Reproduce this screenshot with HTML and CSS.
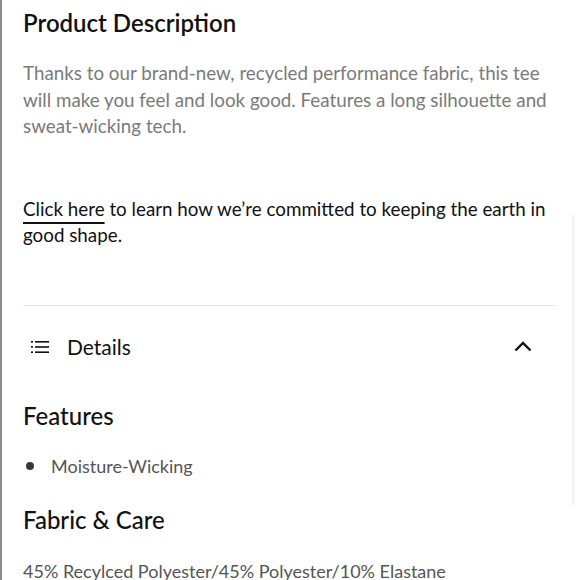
FILE: index.html
```html
<!DOCTYPE html>
<html>
<head>
<meta charset="utf-8">
<link rel="stylesheet" href="styles.css">
</head>
<body>
<div class="page">
  <main class="content">
    <h2 class="title">Product Description</h2>
    <p class="desc">Thanks to our brand-new, recycled performance fabric, this tee will make you feel and look good. Features a long silhouette and sweat-wicking tech.</p>
    <p class="earth"><a class="link" href="#">Click here</a> to learn how we’re committed to keeping the earth in good shape.</p>
    <hr class="divider">
    <div class="acc-head">
      <svg class="list-icon" width="18" height="14" viewBox="0 0 18 14">
        <rect x="0" y="1" width="2" height="1.6" fill="#111"/>
        <rect x="4" y="1" width="14" height="1.6" fill="#111"/>
        <rect x="0" y="6.2" width="2" height="1.6" fill="#111"/>
        <rect x="4" y="6.2" width="14" height="1.6" fill="#111"/>
        <rect x="0" y="11.4" width="2" height="1.6" fill="#111"/>
        <rect x="4" y="11.4" width="14" height="1.6" fill="#111"/>
      </svg>
      <span class="acc-title">Details</span>
      <svg class="chev" width="18" height="11" viewBox="0 0 18 11">
        <path d="M1.5 9.5 L9 2 L16.5 9.5" fill="none" stroke="#111" stroke-width="2.4"/>
      </svg>
    </div>
    <h3 class="sub sub-first">Features</h3>
    <ul class="bullets">
      <li class="bullet">Moisture-Wicking</li>
    </ul>
    <h3 class="sub">Fabric &amp; Care</h3>
    <p class="fabric">45% Recylced Polyester/45% Polyester/10% Elastane</p>
  </main>
  <div class="scrolltrack"></div>
</div>
</body>
</html>
```
FILE: styles.css
```css
html, body {
  margin: 0;
  padding: 0;
  background: #fff;
  height: 100%;
  overflow: hidden;
}
body {
  font-family: "Lato", "Noto Sans", sans-serif;
  color: #111;
}
.page {
  display: flex;
  height: 580px;
  border-left: 2px solid #8a8a8a;
  box-sizing: border-box;
}
.content {
  width: 534px;
  padding-left: 21px;
}
.title {
  margin: 8px 0 0;
  font-size: 24px;
  font-weight: 600;
  line-height: 30px;
}
.desc {
  margin: 22px 0 0;
  font-size: 18.8px;
  line-height: 26.5px;
  color: #7a7a7a;
}
.earth {
  margin: 56px 0 0;
  font-size: 18.8px;
  line-height: 26.5px;
  color: #111;
}
.link {
  color: #111;
  text-decoration: underline;
  text-decoration-thickness: 1.5px;
  text-underline-offset: 6px;
}
.divider {
  margin: 56px 0 0;
  border: 0;
  border-top: 1px solid #e8e8e8;
  height: 0;
}
.acc-head {
  display: flex;
  align-items: center;
  height: 82px;
  padding: 0 25px 0 8px;
}
.list-icon { flex: none; }
.acc-title {
  margin-left: 18px;
  font-size: 21px;
  flex: 1;
}
.chev { flex: none; }
.sub {
  margin: 0;
  font-size: 24px;
  font-weight: 500;
  line-height: 30px;
}
.sub-first {
  margin-top: 13px;
}
.bullets {
  list-style: none;
  margin: 22px 0 26px;
  padding: 0;
  font-size: 18px;
  color: #555;
  line-height: 26px;
}
.bullet {
  display: flex;
  align-items: center;
}
.bullet::before {
  content: "";
  width: 8px;
  height: 8px;
  border-radius: 50%;
  background: #3a3a3a;
  margin: 0 17px 0 3px;
  flex: none;
}
.fabric {
  margin: 25px 0 0;
  font-size: 18px;
  color: #555;
}
.scrolltrack {
  margin: 215px 0 0 15px;
  width: 3px;
  height: 290px;
  background: #f2f2f2;
}
```
